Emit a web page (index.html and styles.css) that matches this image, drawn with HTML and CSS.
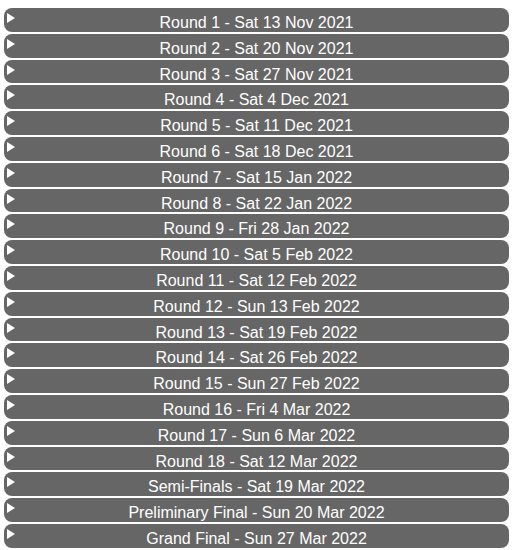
FILE: index.html
```html
<!DOCTYPE html>
<html lang="en">
<head>
  <meta charset="UTF-8" />
  <meta name="viewport" content="width=device-width, initial-scale=1" />
  <title>Fixtures</title>
  <link rel="stylesheet" href="styles.css">
</head>
<body>
  <div class="rounds">
    <details class="round"><summary>Round 1 - Sat 13 Nov 2021</summary></details>
    <details class="round"><summary>Round 2 - Sat 20 Nov 2021</summary></details>
    <details class="round"><summary>Round 3 - Sat 27 Nov 2021</summary></details>
    <details class="round"><summary>Round 4 - Sat 4 Dec 2021</summary></details>
    <details class="round"><summary>Round 5 - Sat 11 Dec 2021</summary></details>
    <details class="round"><summary>Round 6 - Sat 18 Dec 2021</summary></details>
    <details class="round"><summary>Round 7 - Sat 15 Jan 2022</summary></details>
    <details class="round"><summary>Round 8 - Sat 22 Jan 2022</summary></details>
    <details class="round"><summary>Round 9 - Fri 28 Jan 2022</summary></details>
    <details class="round"><summary>Round 10 - Sat 5 Feb 2022</summary></details>
    <details class="round"><summary>Round 11 - Sat 12 Feb 2022</summary></details>
    <details class="round"><summary>Round 12 - Sun 13 Feb 2022</summary></details>
    <details class="round"><summary>Round 13 - Sat 19 Feb 2022</summary></details>
    <details class="round"><summary>Round 14 - Sat 26 Feb 2022</summary></details>
    <details class="round"><summary>Round 15 - Sun 27 Feb 2022</summary></details>
    <details class="round"><summary>Round 16 - Fri 4 Mar 2022</summary></details>
    <details class="round"><summary>Round 17 - Sun 6 Mar 2022</summary></details>
    <details class="round"><summary>Round 18 - Sat 12 Mar 2022</summary></details>
    <details class="round"><summary>Semi-Finals - Sat 19 Mar 2022</summary></details>
    <details class="round"><summary>Preliminary Final - Sun 20 Mar 2022</summary></details>
    <details class="round"><summary>Grand Final - Sun 27 Mar 2022</summary></details>
  </div>
</body>
</html>
```

FILE: styles.css
```css
body {
  font-family: "Liberation Sans", Arial, sans-serif;
  margin: 8px 4px;
  background: #fff;
}
.rounds {
  display: flex;
  flex-direction: column;
  gap: 2px;
}
.round summary {
  position: relative;
  display: block;
  list-style: none;
  box-sizing: border-box;
  height: 23.8px;
  padding-top: 6px;
  line-height: 18px;
  font-size: 16px;
  text-align: center;
  color: #fff;
  background: #666;
  border-radius: 8px;
  cursor: pointer;
}
.round summary::-webkit-details-marker {
  display: none;
}
.round summary::before {
  content: "";
  position: absolute;
  left: 3px;
  top: 5px;
  border-left: 8px solid #fff;
  border-top: 5.5px solid transparent;
  border-bottom: 5.5px solid transparent;
}
```
